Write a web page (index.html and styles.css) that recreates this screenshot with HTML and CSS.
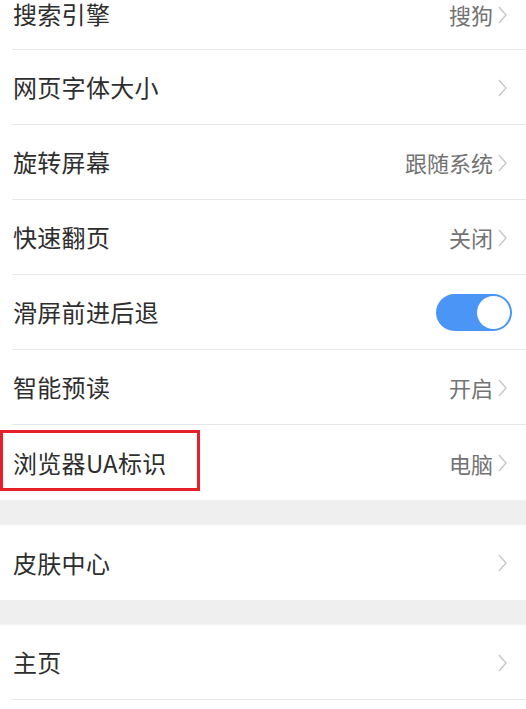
FILE: index.html
```html
<!DOCTYPE html>
<html lang="zh-CN">
<head>
<meta charset="utf-8">
<link rel="stylesheet" href="styles.css">
</head>
<body>
<div class="page">
  <div class="group">
    <div class="row"><div class="inner top"><span class="label">搜索引擎</span><span class="value">搜狗</span><svg class="chev" viewBox="0 0 9 18"><polyline points="1,1 8,9 1,17"/></svg></div></div>
    <div class="row"><div class="inner"><span class="label">网页字体大小</span><svg class="chev" viewBox="0 0 9 18"><polyline points="1,1 8,9 1,17"/></svg></div></div>
    <div class="row"><div class="inner"><span class="label">旋转屏幕</span><span class="value">跟随系统</span><svg class="chev" viewBox="0 0 9 18"><polyline points="1,1 8,9 1,17"/></svg></div></div>
    <div class="row"><div class="inner"><span class="label">快速翻页</span><span class="value">关闭</span><svg class="chev" viewBox="0 0 9 18"><polyline points="1,1 8,9 1,17"/></svg></div></div>
    <div class="row"><div class="inner toggle-row"><span class="label">滑屏前进后退</span><span class="toggle"><span class="knob"></span></span></div></div>
    <div class="row"><div class="inner"><span class="label">智能预读</span><span class="value">开启</span><svg class="chev" viewBox="0 0 9 18"><polyline points="1,1 8,9 1,17"/></svg></div></div>
    <div class="row highlighted"><div class="inner last"><span class="label">浏览器UA标识</span><span class="value">电脑</span><svg class="chev" viewBox="0 0 9 18"><polyline points="1,1 8,9 1,17"/></svg></div><span class="mark"></span></div>
  </div>
  <div class="gap"></div>
  <div class="group">
    <div class="row"><div class="inner last"><span class="label">皮肤中心</span><svg class="chev" viewBox="0 0 9 18"><polyline points="1,1 8,9 1,17"/></svg></div></div>
  </div>
  <div class="gap"></div>
  <div class="group">
    <div class="row"><div class="inner"><span class="label">主页</span><svg class="chev" viewBox="0 0 9 18"><polyline points="1,1 8,9 1,17"/></svg></div></div>
  </div>
</div>
</body>
</html>
```

FILE: styles.css
```css
html, body {
  margin: 0;
  padding: 0;
  background: #ffffff;
}
body {
  font-family: "Noto Sans CJK SC", "Noto Sans", sans-serif;
  overflow: hidden;
}
.page {
  width: 526px;
}
.group {
  background: #ffffff;
}
.row {
  padding-left: 12px;
  position: relative;
}
.inner {
  height: 75px;
  box-sizing: border-box;
  display: flex;
  align-items: center;
  padding-left: 1px;
  padding-right: 19px;
  padding-top: 1px;
  border-bottom: 1px solid #e8e8e8;
}
.inner.top {
  height: 50px;
  padding-top: 0;
  padding-bottom: 20px;
}
.inner.last {
  border-bottom: none;
}
.label {
  flex: 1;
  font-size: 24px;
  line-height: 1.2;
  color: #2e2e2e;
  letter-spacing: 0.3px;
}
.value {
  font-size: 22px;
  line-height: 1.2;
  color: #737373;
  margin-right: 5px;
}
.chev {
  width: 9px;
  height: 18px;
  fill: none;
  stroke: #c8c8c8;
  stroke-width: 1.4;
}
.toggle-row {
  padding-right: 14px;
}
.toggle {
  width: 76px;
  height: 37px;
  border-radius: 19px;
  background: #4b95f7;
  display: flex;
  align-items: center;
  justify-content: flex-end;
  padding-right: 2px;
  box-sizing: border-box;
}
.knob {
  width: 33px;
  height: 33px;
  border-radius: 50%;
  background: #ffffff;
}
.mark {
  position: absolute;
  left: 0;
  top: 5px;
  width: 200px;
  height: 61px;
  border: 3px solid #e61f2b;
  box-sizing: border-box;
}
.gap {
  height: 25px;
  background: #efefef;
}
```
